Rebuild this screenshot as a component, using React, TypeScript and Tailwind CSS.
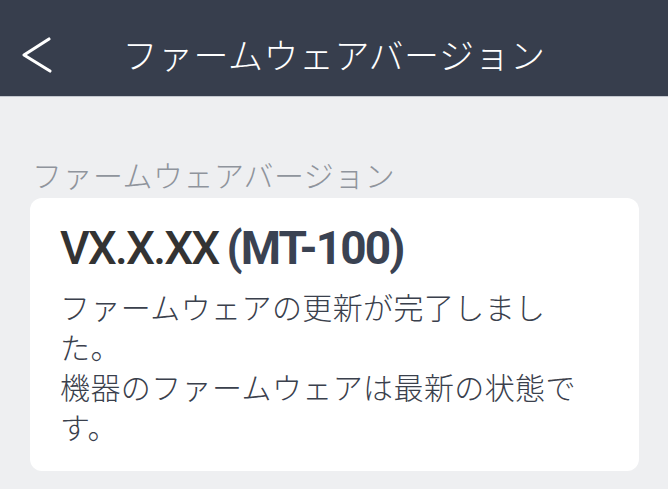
import React from "react";

export default function App() {
  const jp = { fontFamily: '"Noto Sans CJK JP", "Noto Sans", sans-serif' };
  return (
    <div className="w-[668px] h-[489px] bg-[#eeeff1] overflow-hidden" style={jp}>
      <header className="relative h-[97px] bg-[#373e4d] border-b border-[#c3c7ce] flex items-center justify-center">
        <svg
          className="absolute left-[18px] top-[34px]"
          width="40"
          height="42"
          viewBox="0 0 40 42"
          fill="none"
          stroke="#ffffff"
          strokeWidth="3.2"
          strokeLinecap="round"
          strokeLinejoin="round"
        >
          <path d="M31 5 L6 21 L32 37" />
        </svg>
        <h1 className="text-[35px] leading-[40px] text-white font-light tracking-[0.5px] mt-[12px]">
          ファームウェアバージョン
        </h1>
      </header>
      <div className="px-[30px] pt-[57px]">
        <div className="text-[30px] leading-[40px] text-[#8f949c] font-light tracking-[0.5px] pl-[2px]">
          ファームウェアバージョン
        </div>
        <div className="mt-[4px] bg-white rounded-[12px] w-[609px] pl-[30px] pr-[50px] pt-[24px] pb-[25px]">
          <div
            className="flex items-baseline gap-[8px] text-[46px] leading-[53px] tracking-[-0.04em]"
            style={{ fontFamily: 'Roboto, "Liberation Sans", sans-serif' }}
          >
            <span className="font-medium text-[#333333]">VX.X.XX</span>
            <span className="font-bold text-[#3a4252]">(MT-100)</span>
          </div>
          <p className="mt-[11px] text-[30px] leading-[40px] text-[#3a404c] font-light tracking-[0.4px]">
            ファームウェアの更新が完了しました。
            <br />
            機器のファームウェアは最新の状態です。
          </p>
        </div>
      </div>
    </div>
  );
}
